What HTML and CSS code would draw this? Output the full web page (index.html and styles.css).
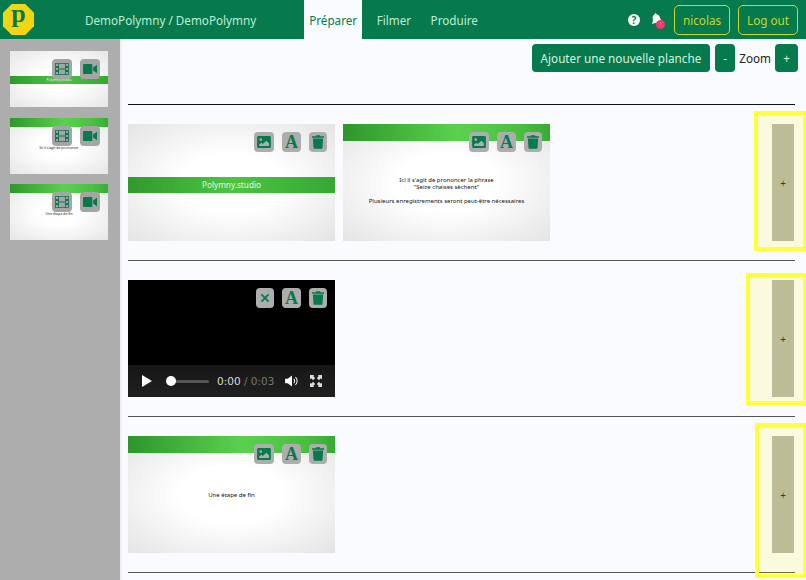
FILE: index.html
```html
<!DOCTYPE html>
<html lang="fr">
  <head>
    <meta charset="UTF-8" />
    <title>Polymny - Préparer</title>
    <link rel="stylesheet" href="styles.css">
  </head>
  <body>
    <svg class="icon-defs" aria-hidden="true">
      <symbol id="i-image" viewBox="0 0 16 14">
        <path fill-rule="evenodd" d="M1.500 0h13A1.500 1.500 0 0 1 16 1.500v11a1.500 1.500 0 0 1-1.500 1.500h-13A1.500 1.500 0 0 1 0 12.500v-11A1.500 1.500 0 0 1 1.500 0zM4.200 2.600a1.600 1.600 0 1 0 0 3.200 1.600 1.600 0 0 0 0-3.200zM2.200 11.600h11.600V8.500L10.800 5.500 6.500 9.300 5 7.800 2.200 10.200z"/>
      </symbol>
      <symbol id="i-trash" viewBox="0 0 14 16">
        <path d="M4.800 0h4.400l.6 1.200H14v1.800H0V1.200h4.200zM1 4h12l-.8 11a1.100 1.100 0 0 1-1.100 1H2.900a1.100 1.100 0 0 1-1.100-1z"/>
      </symbol>
      <symbol id="i-times" viewBox="0 0 12 12">
        <path d="M2.500 1 6 4.500 9.500 1 11 2.500 7.500 6 11 9.500 9.500 11 6 7.500 2.500 11 1 9.500 4.500 6 1 2.500z"/>
      </symbol>
      <symbol id="i-film" viewBox="0 0 16 14">
        <path fill-rule="evenodd" d="M0 0h16v14H0zM1 1v2.500h2.500V1zM1 5.700v2.600h2.500V5.700zM1 10.500V13h2.500v-2.500zM12.500 1v2.500H15V1zM12.500 5.700v2.600H15V5.700zM12.500 10.500V13H15v-2.500zM4.500 1v5.500h7V1zM4.500 7.500V13h7V7.500z"/>
      </symbol>
      <symbol id="i-video" viewBox="0 0 18 13">
        <path d="M1.500 0h9A1.500 1.500 0 0 1 12 1.500v10a1.500 1.500 0 0 1-1.500 1.500h-9A1.500 1.500 0 0 1 0 11.500v-10A1.500 1.500 0 0 1 1.500 0zM13 4.500 18 1v11l-5-3.500z"/>
      </symbol>
    </svg>

    <header class="navbar">
      <div class="logo">
        <svg class="logo-shape" viewBox="0 0 32 32" aria-hidden="true">
          <polygon points="9,0 23,0 32,9 32,23 23,32 9,32 0,23 0,9" />
        </svg>
        <span class="logo-letter">p</span>
      </div>
      <a class="nav-crumb">DemoPolymny / DemoPolymny</a>
      <nav class="nav-tabs">
        <a class="nav-tab active">Préparer</a>
        <a class="nav-tab">Filmer</a>
        <a class="nav-tab">Produire</a>
      </nav>
      <div class="nav-right">
        <span class="help-icon">?</span>
        <span class="bell">
          <svg class="bell-icon" viewBox="0 0 14 16"><path d="M7 0a1.200 1.200 0 0 1 1.200 1.200v.5A4.500 4.500 0 0 1 11.800 6c0 4 1.200 5 2.200 6.200V13H0v-.8C1 11 2.200 10 2.200 6a4.500 4.500 0 0 1 3.600-4.300v-.5A1.200 1.200 0 0 1 7 0zM5.200 14h3.600a1.800 1.800 0 0 1-3.600 0z"/></svg>
          <span class="badge">1</span>
        </span>
        <a class="btn-outline">nicolas</a>
        <a class="btn-outline">Log out</a>
      </div>
    </header>

    <div class="page">
      <aside class="sidebar">
        <div class="thumb">
          <div class="band band-middle"><span class="thumb-text light">Polymny.studio</span></div>
          <div class="thumb-actions">
            <span class="action thumb-action"><svg><use href="#i-film" /></svg></span>
            <span class="action thumb-action"><svg><use href="#i-video" /></svg></span>
          </div>
        </div>
        <div class="thumb">
          <div class="band band-top"></div>
          <span class="thumb-text thumb-text-center">Ici il s'agit de prononcer</span>
          <div class="thumb-actions">
            <span class="action thumb-action"><svg><use href="#i-film" /></svg></span>
            <span class="action thumb-action"><svg><use href="#i-video" /></svg></span>
          </div>
        </div>
        <div class="thumb">
          <div class="band band-top"></div>
          <span class="thumb-text thumb-text-center">Une étape de fin</span>
          <div class="thumb-actions">
            <span class="action thumb-action"><svg><use href="#i-film" /></svg></span>
            <span class="action thumb-action"><svg><use href="#i-video" /></svg></span>
          </div>
        </div>
      </aside>

      <main class="content">
        <div class="toolbar">
          <button class="btn btn-add">Ajouter une nouvelle planche</button>
          <button class="btn btn-small">-</button>
          <span class="zoom-label">Zoom</span>
          <button class="btn btn-small btn-plus">+</button>
        </div>
        <hr class="divider" />

        <section class="row">
          <div class="slides">
            <div class="slide">
              <div class="band band-middle band-title">Polymny.studio</div>
              <div class="slide-actions">
                <span class="action"><svg><use href="#i-image" /></svg></span>
                <span class="action action-font">A</span>
                <span class="action"><svg class="trash"><use href="#i-trash" /></svg></span>
              </div>
            </div>
            <div class="slide">
              <div class="band band-top"></div>
              <div class="slide-text">
                <p>Ici il s'agit de prononcer la phrase<br />"Seize chaises sèchent"</p>
                <p>Plusieurs enregistrements seront peut-être nécessaires</p>
              </div>
              <div class="slide-actions">
                <span class="action"><svg><use href="#i-image" /></svg></span>
                <span class="action action-font">A</span>
                <span class="action"><svg class="trash"><use href="#i-trash" /></svg></span>
              </div>
            </div>
          </div>
          <div class="add-col">+<span class="highlight highlight-a"></span></div>
        </section>

        <section class="row">
          <div class="slides">
            <div class="slide slide-video">
              <div class="player">
                <svg class="play" viewBox="0 0 10 12"><path d="M0 0l10 6-10 6z" /></svg>
                <span class="seek"><span class="seek-knob"></span></span>
                <span class="time">0:00 <span class="time-total">/ 0:03</span></span>
                <svg class="volume" viewBox="0 0 16 14"><path d="M0 4.500h3L8 .5v13l-5-4H0z" /><path class="volume-wave" d="M10 4.500a3.500 3.500 0 0 1 0 5M12 2.500a6 6 0 0 1 0 9" /></svg>
                <svg class="fullscreen" viewBox="0 0 14 14"><path d="M0 0h5L3.700 1.300 6 3.600 3.600 6 1.300 3.700 0 5zM14 0v5l-1.300-1.300L10.400 6 8 3.600l2.300-2.300L9 0zM0 14V9l1.300 1.300L3.600 8 6 10.400l-2.300 2.300L5 14zM14 14H9l1.300-1.300L8 10.400 10.400 8l2.300 2.300L14 9z" /></svg>
              </div>
              <div class="slide-actions">
                <span class="action"><svg class="times"><use href="#i-times" /></svg></span>
                <span class="action action-font">A</span>
                <span class="action"><svg class="trash"><use href="#i-trash" /></svg></span>
              </div>
            </div>
          </div>
          <div class="add-col">+<span class="highlight highlight-b"></span></div>
        </section>

        <section class="row">
          <div class="slides">
            <div class="slide">
              <div class="band band-top"></div>
              <div class="slide-text slide-text-end">
                <p>Une étape de fin</p>
              </div>
              <div class="slide-actions">
                <span class="action"><svg><use href="#i-image" /></svg></span>
                <span class="action action-font">A</span>
                <span class="action"><svg class="trash"><use href="#i-trash" /></svg></span>
              </div>
            </div>
          </div>
          <div class="add-col">+<span class="highlight highlight-c"></span></div>
        </section>
      </main>
    </div>
  </body>
</html>
```

FILE: styles.css
```css
* {
  margin: 0;
  padding: 0;
  box-sizing: border-box;
}

html,
body {
  height: 580px;
  overflow: hidden;
}

body {
  font-family: "Noto Sans", "Open Sans", sans-serif;
  font-size: 11.7px;
  color: #222;
  background: #fafbff;
}

.icon-defs {
  display: none;
}

/* Top bar */
.navbar {
  height: 39px;
  display: flex;
  align-items: center;
  background: #067a4c;
  color: #bdeed6;
}

.logo {
  position: relative;
  width: 31px;
  height: 31px;
  margin-left: 3px;
  flex: none;
  text-align: center;
}

.logo-shape {
  position: absolute;
  left: 0;
  top: 0;
  width: 31px;
  height: 31px;
  fill: #f4d512;
}

.logo-letter {
  position: relative;
  display: block;
  font-family: "Liberation Serif", serif;
  font-weight: bold;
  font-size: 26px;
  line-height: 19px;
  color: #067a4c;
}

.nav-crumb {
  margin-left: 51px;
}

.nav-tabs {
  display: flex;
  height: 39px;
  margin-left: 48px;
}

.nav-tab {
  display: flex;
  align-items: center;
  padding: 0 5px;
  margin-right: 9.5px;
}

.nav-tab.active {
  background: #fafbff;
  color: #067a4c;
}

.nav-right {
  margin-left: auto;
  margin-right: 8px;
  display: flex;
  align-items: center;
}

.help-icon {
  width: 12px;
  height: 12px;
  border-radius: 50%;
  background: white;
  color: #067a4c;
  font-size: 10px;
  font-weight: bold;
  line-height: 12px;
  text-align: center;
}

.bell {
  position: relative;
  width: 11px;
  height: 13px;
  margin-left: 11px;
  margin-right: 12px;
}

.bell-icon {
  display: block;
  width: 11px;
  height: 12px;
  fill: white;
  transform: rotate(-12deg);
}

.badge {
  position: absolute;
  left: 5px;
  top: 7px;
  width: 9px;
  height: 9px;
  border-radius: 50%;
  background: #f0386b;
  color: #f7a;
  font-size: 6px;
  line-height: 9px;
  text-align: center;
}

.btn-outline {
  height: 30px;
  display: flex;
  align-items: center;
  padding: 0 8px;
  margin-left: 8px;
  border: 1px solid #c9d52f;
  border-radius: 5px;
  color: #c9d52f;
}

.bell + .btn-outline {
  margin-left: 0;
}

/* Page */
.page {
  display: flex;
  height: 541px;
}

.sidebar {
  width: 120px;
  flex: none;
  padding: 12px 12px 0 10px;
  background: #adadad;
  display: flex;
  flex-direction: column;
  gap: 10.5px;
}

.thumb {
  position: relative;
  height: 56px;
  overflow: hidden;
  background: radial-gradient(ellipse at center, #fff 30%, #e6e6e6 100%);
}

.band {
  background: linear-gradient(90deg, #2f9a2c, #4cc443 50%, #35a832);
  color: white;
}

.band-top {
  height: 17px;
  background: linear-gradient(90deg, #2d972b, #5ad14e 55%, #49c040 85%, #37ac34);
}

.thumb .band-top {
  height: 9px;
}

.thumb .band-middle {
  margin-top: 25px;
  height: 8px;
  text-align: center;
  line-height: 8px;
}

.thumb-text {
  display: block;
  font-size: 3.5px;
  color: #111;
}

.thumb-text.light {
  color: #eee;
}

.thumb-text-center {
  margin-top: 18px;
  text-align: center;
}

.thumb-actions {
  position: absolute;
  top: 8px;
  right: 8px;
  display: flex;
  gap: 8px;
}

.action {
  height: 20px;
  padding: 0 3px;
  display: flex;
  align-items: center;
  justify-content: center;
  border-radius: 4px;
  background: #adadad;
}

.action svg {
  width: 14px;
  height: 12px;
  fill: #067a4c;
}

.action svg.trash {
  width: 12px;
  height: 14px;
}

.action svg.times {
  width: 10px;
  height: 10px;
}

.action-font {
  width: 19px;
  font-family: "Liberation Serif", serif;
  font-size: 18px;
  font-weight: bold;
  color: #067a4c;
}

.thumb-action {
  width: 20px;
  background: #a5a5a5;
}

/* Main column */
.content {
  flex: 1;
  padding: 5px 11px 0 8px;
  background: #fafbff;
  box-shadow: inset 3px 0 3px -2px rgba(0, 0, 0, 0.08);
}

.toolbar {
  height: 28px;
  margin-right: -3px;
  display: flex;
  justify-content: flex-end;
  align-items: center;
  gap: 4px;
}

.divider {
  margin-top: 32px;
  border: none;
  border-top: 1px solid #111;
}

.btn {
  height: 28px;
  padding: 0 8px;
  border: none;
  border-radius: 4px;
  background: #067a4c;
  color: #d5f3e4;
  font: inherit;
}

.btn-add {
  padding: 0 9px;
  margin-right: 1px;
}

.btn-small {
  width: 20px;
  padding: 0;
}

.btn-plus {
  width: 23px;
}

.row {
  height: 156px;
  padding-top: 19px;
  border-bottom: 1px solid #555;
  display: flex;
  justify-content: space-between;
}

.slides {
  display: flex;
  gap: 8px;
}

.slide {
  position: relative;
  width: 207px;
  height: 117px;
  overflow: hidden;
  background: radial-gradient(ellipse at center, #fff 35%, #e4e4e4 100%);
}

.band-middle {
  height: 16px;
}

.slide > .band-middle {
  margin-top: 53px;
}

.band-title {
  font-size: 8.2px;
  line-height: 16px;
  text-align: center;
  color: #e8f7e8;
}

.slide-text {
  padding-top: 36px;
  text-align: center;
  font-size: 6px;
  line-height: 7px;
  color: #111;
}

.slide-text p + p {
  margin-top: 7px;
}

.slide-text-end {
  padding-top: 39px;
}

.slide-actions {
  position: absolute;
  top: 8px;
  right: 8px;
  display: flex;
  gap: 8px;
}

.slide-actions .action {
  min-width: 18px;
}

.slide-video {
  background: #000;
}

.player {
  position: absolute;
  left: 0;
  right: 0;
  bottom: 0;
  height: 32px;
  padding: 0 13px 0 14px;
  display: flex;
  align-items: center;
  background: linear-gradient(180deg, #161616, #202020);
  color: #ddd;
  font-family: "DejaVu Sans", sans-serif;
  font-size: 10.5px;
}

.play {
  width: 10px;
  height: 12px;
  fill: white;
}

.seek {
  position: relative;
  width: 38px;
  height: 3px;
  margin-left: 19px;
  border-radius: 2px;
  background: #555;
}

.seek-knob {
  position: absolute;
  left: -5px;
  top: -3.5px;
  width: 10px;
  height: 10px;
  border-radius: 50%;
  background: white;
}

.time {
  margin-left: 8px;
  white-space: nowrap;
}

.time-total {
  color: #777;
}

.volume {
  width: 14px;
  height: 12px;
  margin-left: auto;
  fill: white;
}

.volume-wave {
  fill: none;
  stroke: white;
  stroke-width: 1.2;
}

.fullscreen {
  width: 12px;
  height: 12px;
  margin-left: 11px;
  fill: #ddd;
}

/* Add column, with the yellow help frame laid over it */
.add-col {
  position: relative;
  width: 22px;
  height: 117px;
  margin-right: 1px;
  display: flex;
  align-items: center;
  justify-content: center;
  background: #b3b3ae;
  color: #222;
  font-size: 10px;
}

.highlight {
  position: absolute;
  border: 4px solid #ffff3a;
  background: rgba(255, 255, 0, 0.13);
}

.highlight-a {
  top: -13px;
  bottom: -10px;
  left: -18px;
  right: -13px;
}

.highlight-b {
  top: -7px;
  bottom: -8px;
  left: -26px;
  right: -13px;
}

.highlight-c {
  top: -13px;
  bottom: -25px;
  left: -17px;
  right: -13px;
}
```
